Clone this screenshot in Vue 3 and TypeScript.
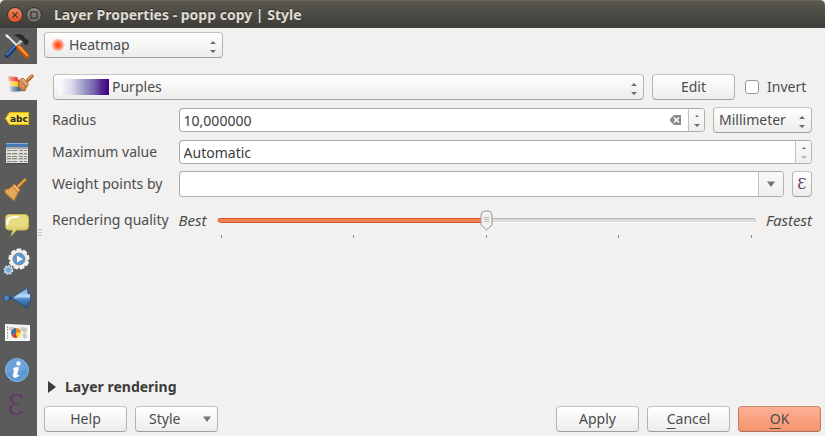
<script setup lang="ts">
import { computed, ref } from 'vue'

type IconName =
  | 'general' | 'style' | 'labels' | 'fields' | 'rendering' | 'display'
  | 'actions' | 'joins' | 'diagrams' | 'metadata' | 'variables'

const tabs: { id: IconName; label: string }[] = [
  { id: 'general', label: 'General' },
  { id: 'style', label: 'Style' },
  { id: 'labels', label: 'Labels' },
  { id: 'fields', label: 'Fields' },
  { id: 'rendering', label: 'Rendering' },
  { id: 'display', label: 'Display' },
  { id: 'actions', label: 'Actions' },
  { id: 'joins', label: 'Joins' },
  { id: 'diagrams', label: 'Diagrams' },
  { id: 'metadata', label: 'Metadata' },
  { id: 'variables', label: 'Variables' },
]

const activeTab = ref<IconName>('style')
const renderer = ref('Heatmap')
const ramp = ref('Purples')
const unit = ref('Millimeter')
const invert = ref(false)
const radius = ref('10,000000')
const maximum = ref('Automatic')
const weight = ref('')
const quality = ref(2)
const qualityPercent = computed(() => `${(quality.value / 4) * 100}%`)
const teeth = [0, 40, 80, 120, 160, 200, 240, 280, 320]
</script>

<template>
  <div class="window">
    <header class="titlebar">
      <button class="win-btn close" aria-label="Close">
        <svg viewBox="0 0 16 16"><path d="M5 5l6 6M11 5l-6 6" /></svg>
      </button>
      <button class="win-btn max" aria-label="Maximize">
        <svg viewBox="0 0 16 16"><path d="M4.500 4.500h7v7h-7z" /></svg>
      </button>
      <h1>Layer Properties - popp copy | Style</h1>
    </header>

    <div class="body">
      <nav class="sidebar">
        <button
          v-for="tab in tabs"
          :key="tab.id"
          class="tab"
          :class="{ active: tab.id === activeTab }"
          :aria-label="tab.label"
          @click="activeTab = tab.id"
        >
          <svg viewBox="0 0 37 36" fill="none">
            <g v-if="tab.id === 'general'">
              <path d="M17 17L7 27.500" stroke="#173a6b" stroke-width="4.600" stroke-linecap="round" />
              <path d="M16 17L7 26.500" stroke="#3f73b5" stroke-width="2" stroke-linecap="round" />
              <path d="M17 17l5-5" stroke="#c3c5c3" stroke-width="3" />
              <path d="M14 7.500c4-2.500 8-1.500 10 1l2 2.500 2.500 1v3l-2.500 2.500-2-1.500-1-2.500-3-2c-1-2-3-3-6-4z" fill="#272b2c" />
              <path d="M6.500 7l11 11" stroke="#e5e5e3" stroke-width="2" />
              <path d="M5.500 6l2.500 1.500 1 2.500-3-1z" fill="#fff" />
              <path d="M18.500 19l8.500 9" stroke="#c95300" stroke-width="4.800" stroke-linecap="round" />
              <path d="M19 18.500l8 8.500" stroke="#ff9a32" stroke-width="2" stroke-linecap="round" />
            </g>
            <g v-else-if="tab.id === 'style'">
              <defs>
                <linearGradient id="smear-red"><stop offset="0" stop-color="#e22" stop-opacity=".1" /><stop offset=".7" stop-color="#e84a3a" /></linearGradient>
                <linearGradient id="smear-yellow"><stop offset="0" stop-color="#fc2" stop-opacity=".1" /><stop offset=".6" stop-color="#ffd21c" /></linearGradient>
                <linearGradient id="smear-blue"><stop offset="0" stop-color="#368" stop-opacity=".1" /><stop offset=".6" stop-color="#4d6c90" /></linearGradient>
              </defs>
              <path d="M7 12l10 1 3 5-11-1z" fill="url(#smear-red)" />
              <path d="M8 17l11 1 3 5-12-1z" fill="url(#smear-yellow)" />
              <path d="M9 22l12 1 3 4-13 1z" fill="url(#smear-blue)" />
              <path d="M27 17l5-5" stroke="#a95c25" stroke-width="3.400" stroke-linecap="round" />
              <path d="M27 16.500l5-5" stroke="#e3a06a" stroke-width="1.400" stroke-linecap="round" />
              <path d="M20 15.500l3-1.500 5.500 6-1.500 3z" fill="#e5aa78" stroke="#a75c28" stroke-width=".8" />
              <path d="M19 16l7.500 7-1.500 4-3-.5-4-4.500z" fill="#cf8449" stroke="#a75c28" stroke-width=".8" />
              <path d="M20 19l4 4" stroke="#e5aa78" />
            </g>
            <g v-else-if="tab.id === 'labels'">
              <path d="M5.500 18.500l4-6h19v12h-19z" fill="#ffe14a" stroke="#e3b600" stroke-linejoin="round" />
              <circle cx="8" cy="18.500" r="1" fill="#fff8c0" />
              <text x="10" y="22" class="abc">abc</text>
            </g>
            <g v-else-if="tab.id === 'fields'">
              <path d="M6 7h22v20H6z" fill="#e2e3dd" />
              <path d="M6 8h22v3H6z" fill="#4679b4" />
              <path d="M6 7.500h22" stroke="#88aedb" />
              <path d="M6 11h22v2H6z" fill="#aaa9a4" />
              <path d="M7 14.500h20M7 17.500h20M7 20.500h20M7 22.500h20M7 25.500h20" stroke="#84867f" stroke-dasharray="4 1 5 2" />
              <path d="M6 18.500h22M6 23.500h22" stroke="#c7c9c1" />
              <path d="M6 27.500h22" stroke="#484947" />
            </g>
            <g v-else-if="tab.id === 'rendering'">
              <path d="M18 15l7-7" stroke="#a76517" stroke-width="3.400" stroke-linecap="round" />
              <path d="M18 14.500l7-7" stroke="#eba448" stroke-width="1.900" stroke-linecap="round" />
              <path d="M14 12l6 6-1.500 2-6-5.500z" fill="#ffc06a" stroke="#c07c2a" stroke-width=".7" />
              <path d="M12.500 14l6 6-4.500 9-9-8v-3.500l3.500-.5z" fill="#dfa050" stroke="#b06e20" stroke-width=".7" />
              <path d="M7 19l6 6M9 18l5.500 5.500M11 16.500l5 5" stroke="#f5be73" />
            </g>
            <g v-else-if="tab.id === 'display'">
              <path d="M9 6.500h16q3.500 0 3.500 3.500v8q0 4-3.500 4h-8.500L11 28l2-6H9q-3.500 0-3.500-4v-8Q5.500 6.500 9 6.500z" fill="#e8dc80" stroke="#c4b349" stroke-linejoin="round" />
              <path d="M7.500 16q-1-8 10-7" stroke="#fff" stroke-width="2" stroke-linecap="round" />
              <path d="M9 20h14q4 0 4-4" stroke="#d8c95e" />
            </g>
            <g v-else-if="tab.id === 'actions'">
              <g fill="#f0f0ed">
                <circle cx="19" cy="15" r="9" />
                <rect v-for="t in teeth" :key="t" x="16.500" y="4.500" width="5" height="5" rx="1" :transform="`rotate(${t} 19 15)`" />
              </g>
              <circle cx="19" cy="15" r="6" fill="#5b94cf" stroke="#7f8f9c" />
              <path d="M17 11.500v7l6-3.500z" fill="#fff" />
              <circle cx="8.500" cy="26" r="4" fill="#6ca1d8" stroke="#eee" stroke-width="1.500" stroke-dasharray="2 1" />
              <circle cx="8.500" cy="26" r="2.700" fill="#72a6db" stroke="#b6cbe0" />
            </g>
            <g v-else-if="tab.id === 'joins'">
              <defs>
                <linearGradient id="join-fill" x1="0" y1="0" x2="0" y2="1"><stop offset="0" stop-color="#5d96c8" /><stop offset=".42" stop-color="#b7dcfa" /><stop offset=".55" stop-color="#4a86bf" /><stop offset="1" stop-color="#254f8e" /></linearGradient>
              </defs>
              <path d="M9 18h4" stroke="#244b75" stroke-width="2" />
              <circle cx="6.500" cy="18" r="3" fill="#4d87c0" stroke="#244f83" />
              <path d="M12 18L27.500 7.500l.5 6h2.500v9H28l-.5 6z" fill="url(#join-fill)" stroke="#234c80" stroke-width=".8" stroke-linejoin="round" />
            </g>
            <g v-else-if="tab.id === 'diagrams'">
              <path d="M5.500 8.500l24 1v15h-24z" fill="#f3f3ef" stroke="#fff" />
              <path d="M9 11h5l2 2-4 2-3-1zM20 11l7 1v3l-3 2-3-3zM22 18l4-1 1 4-3 2z" fill="#c9cac4" />
              <path d="M7.500 10v13" stroke="#a5a7a0" stroke-dasharray="2 1" />
              <circle cx="16" cy="17" r="5" fill="#ffdb32" />
              <path d="M16 17v-5a5 5 0 0 0-5 5l1 3z" fill="#486fa6" />
              <path d="M16 17l-4 3a5 5 0 0 0 5 2z" fill="#df3636" />
              <path d="M16 12a5 5 0 0 1 5 4l-5 1z" fill="#e88c31" />
            </g>
            <g v-else-if="tab.id === 'metadata'">
              <circle cx="17" cy="18" r="11.500" fill="#5c99d5" stroke="#8bbae5" />
              <path d="M17 6.500A11.500 11.500 0 0 0 6 20q11 2 22-4A11.500 11.500 0 0 0 17 6.500z" fill="#6da3da" />
              <circle cx="18.500" cy="11.500" r="2.200" fill="#fff" />
              <path d="M14 16l4.500-.5-2 8h2.500l-1 1-3.500 1-1.500-1.500 2-7-1.500.5z" fill="#fff" stroke="#fff" stroke-linejoin="round" />
            </g>
            <text v-else x="16" y="27" text-anchor="middle" class="epsilon-large">Ɛ</text>
          </svg>
        </button>
      </nav>
      <div class="splitter"><i /><i /><i /></div>

      <main class="content">
        <div class="combo renderer">
          <span class="heat-dot" />
          <select v-model="renderer" aria-label="Renderer"><option>Heatmap</option></select>
          <svg class="updown" viewBox="0 0 6 12"><path d="M0 3l3-3 3 3zM0 9l3 3 3-3z" /></svg>
        </div>

        <form class="settings" @submit.prevent>
          <div class="row wide">
            <div class="combo ramp">
              <span class="swatch" />
              <select v-model="ramp" aria-label="Color ramp"><option>Purples</option></select>
              <svg class="updown" viewBox="0 0 6 12"><path d="M0 3l3-3 3 3zM0 9l3 3 3-3z" /></svg>
            </div>
            <button type="button" class="btn">Edit</button>
            <label class="check"><input v-model="invert" type="checkbox"><span>Invert</span></label>
          </div>

          <label for="radius">Radius</label>
          <div class="row">
            <div class="field">
              <input id="radius" v-model="radius" type="text">
              <button type="button" class="clear" aria-label="Clear">
                <svg viewBox="0 0 11 10"><path d="M4 0h7v10H4L0 6V4z" fill="#8c8c8a" /><path d="M4 2.500l5 5M9 2.500l-5 5" stroke="#fff" stroke-width="1.500" /></svg>
              </button>
              <button type="button" class="spin" aria-label="Adjust radius">
                <svg viewBox="0 0 6 13"><path d="M1 3l2-2 2 2z" /><path d="M0 10l3 3 3-3z" /></svg>
              </button>
            </div>
            <div class="combo unit">
              <select v-model="unit" aria-label="Unit"><option>Millimeter</option></select>
              <svg class="updown" viewBox="0 0 6 12"><path d="M0 3l3-3 3 3zM0 9l3 3 3-3z" /></svg>
            </div>
          </div>

          <label for="maximum">Maximum value</label>
          <div class="field">
            <input id="maximum" v-model="maximum" type="text">
            <button type="button" class="spin" aria-label="Adjust maximum">
              <svg viewBox="0 0 6 13"><path d="M1 3l2-2 2 2z" /><path class="dim" d="M0 10l3 3 3-3z" /></svg>
            </button>
          </div>

          <label for="weight">Weight points by</label>
          <div class="row">
            <div class="field tall">
              <input id="weight" v-model="weight" type="text">
              <button type="button" class="drop" aria-label="Choose field">
                <svg viewBox="0 0 8 6"><path d="M0 .5h8L4 6z" /></svg>
              </button>
            </div>
            <button type="button" class="btn expr" aria-label="Expression">Ɛ</button>
          </div>

          <label for="quality" class="quality-label">Rendering quality</label>
          <div class="row quality">
            <em>Best</em>
            <div class="slider">
              <div class="track"><div class="fill" :style="{ width: qualityPercent }" /></div>
              <div class="ticks"><i v-for="n in 5" :key="n" /></div>
              <div class="thumb-rail">
                <svg class="thumb" :style="{ left: qualityPercent }" viewBox="0 0 13 21">
                  <path d="M1 5q0-4 4-4h3q4 0 4 4v10l-5.500 5L1 15z" fill="#f0f0ee" stroke="#989894" />
                  <path d="M4 7.500h5M4 9.500h5M4 11.500h5" stroke="#b9b9b5" />
                </svg>
              </div>
              <input id="quality" v-model.number="quality" type="range" min="0" max="4">
            </div>
            <em>Fastest</em>
          </div>
        </form>

        <button class="disclosure">
          <svg viewBox="0 0 8 12"><path d="M0 0l8 6-8 6z" /></svg>
          Layer rendering
        </button>

        <footer class="actions">
          <button class="btn">Help</button>
          <button class="btn menu">
            <span>Style</span>
            <svg viewBox="0 0 8 6"><path d="M0 .5h8L4 6z" /></svg>
          </button>
          <span class="spacer" />
          <button class="btn">Apply</button>
          <button class="btn"><u>C</u>ancel</button>
          <button class="btn primary"><u>O</u>K</button>
        </footer>
      </main>
    </div>
  </div>
</template>

<style>
body {
  background: #f2f1f0;
}
</style>

<style scoped>
* {
  box-sizing: border-box;
}
.window {
  display: flex;
  flex-direction: column;
  min-height: 100vh;
  background: #f2f1f0;
  color: #4c4c4c;
  font: 14px/20px "Noto Sans", "Open Sans", sans-serif;
}
button, input, select {
  margin: 0;
  font: inherit;
  color: inherit;
}
button {
  padding: 0;
  border: 0;
  background: none;
}
.titlebar {
  display: flex;
  align-items: center;
  gap: 3px;
  height: 28px;
  padding: 0 7px;
  border-top: 1px solid #67655d;
  border-radius: 5px 5px 0 0;
  background: linear-gradient(#59574f, #3d3c38);
}
.titlebar h1 {
  margin: 0 0 0 9px;
  color: #dfdbd2;
  font-size: 14px;
  font-weight: 700;
  text-shadow: 0 -1px #2b2a27;
}
.win-btn {
  width: 16px;
  height: 16px;
  border: 1px solid #35332e;
  border-radius: 50%;
}
.win-btn svg {
  display: block;
  fill: none;
  stroke: #3a3935;
  stroke-width: 1.5;
}
.close {
  background: linear-gradient(#f58560, #e0501f);
}
.max {
  background: linear-gradient(#8b8980, #6a6861);
}
.body {
  display: flex;
  flex: 1;
}
.sidebar {
  display: flex;
  flex-direction: column;
  width: 37px;
  background: #5b5b5b;
}
.tab {
  height: 36px;
}
.tab svg {
  display: block;
  width: 37px;
  height: 36px;
}
.tab.active {
  background: #f2f1f0;
}
.abc {
  fill: #222;
  font: 700 9px "DejaVu Sans", sans-serif;
}
.epsilon-large {
  fill: #68356f;
  font: 27px "DejaVu Serif", serif;
}
.splitter {
  display: flex;
  flex-direction: column;
  justify-content: center;
  gap: 2px;
  width: 7px;
  padding-left: 1px;
}
.splitter i {
  width: 4px;
  height: 1px;
  background: #c5c4c2;
}
.content {
  display: flex;
  flex: 1;
  flex-direction: column;
  min-width: 0;
  padding: 4px 4px 4px 0;
}
.combo {
  display: grid;
  align-items: center;
  height: 26px;
  border: 1px solid;
  border-color: #c4c3c0 #b5b4b1 #a1a09c;
  border-radius: 4px;
  background: linear-gradient(#fff, #ececeb);
}
.combo > * {
  grid-area: 1 / 1;
}
.combo select {
  width: 100%;
  height: 24px;
  padding: 0 16px 0 5px;
  border: 0;
  outline: 0;
  appearance: none;
  background: none;
}
.updown {
  justify-self: end;
  width: 6px;
  height: 12px;
  margin: 4px 6px 0 0;
  fill: #6b6b69;
  pointer-events: none;
}
.renderer {
  width: 179px;
}
.renderer select {
  padding-left: 24px;
}
.heat-dot {
  width: 14px;
  height: 14px;
  margin-left: 6px;
  background: radial-gradient(circle closest-side, #ff4b13 15%, #ff7448 45%, transparent);
}
.ramp {
  flex: 1;
}
.ramp select {
  padding-left: 58px;
}
.swatch {
  width: 50px;
  height: 16px;
  margin-left: 5px;
  background: linear-gradient(90deg, #fcfbfd, #dcdbec 25%, #9d99c8 50%, #7566ae 70%, #53278f 85%, #3f007d);
}
.settings {
  display: grid;
  grid-template-columns: auto 1fr;
  align-items: center;
  gap: 7px 10px;
  margin-top: 16px;
  padding: 0 9px 0 8px;
}
.row {
  display: flex;
  align-items: center;
  gap: 8px;
}
.wide {
  grid-column: 1 / -1;
  padding-left: 1px;
}
.btn {
  width: 83px;
  height: 26px;
  border: 1px solid;
  border-color: #c4c3c0 #b5b4b1 #a1a09c;
  border-radius: 4px;
  background: linear-gradient(#fff, #ececeb);
}
.check {
  display: flex;
  align-items: center;
  gap: 8px;
  width: 69px;
  padding-left: 2px;
}
.check input {
  width: 14px;
  height: 14px;
  border: 1px solid #989792;
  border-radius: 3px;
  appearance: none;
  background: #fff;
}
.check input:checked {
  background: #f07746;
}
.field {
  display: flex;
  flex: 1;
  height: 24px;
  border: 1px solid;
  border-color: #a9a8a4 #b5b4b1 #b0afab #a9a8a4;
  border-radius: 4px;
  background: #fff;
  overflow: hidden;
}
.tall, .tall input {
  height: 26px;
}
.field input {
  flex: 1;
  min-width: 0;
  height: 22px;
  padding: 0 4px;
  border: 0;
  outline: 0;
  background: none;
  color: #3c3c3c;
}
.clear {
  width: 26px;
}
.clear svg {
  display: block;
  width: 11px;
  height: 10px;
  margin: 0 8px;
}
.spin, .drop {
  display: grid;
  place-items: center;
  width: 16px;
  border-left: 1px solid #c4c3c0;
  background: linear-gradient(#fafafa, #efefee);
}
.spin svg {
  width: 6px;
  height: 13px;
  fill: #6b6b69;
}
.spin .dim {
  fill: #b7b7b5;
}
.drop {
  width: 25px;
}
.drop svg, .menu svg {
  width: 8px;
  height: 6px;
  fill: #747472;
}
.unit {
  width: 99px;
}
.expr {
  width: 20px;
  color: #68356f;
  font: 15px/20px "DejaVu Serif", serif;
}
.quality-label, .quality {
  height: 32px;
  line-height: 32px;
}
.quality {
  gap: 10px;
}
.quality em {
  font-size: 15px;
}
.slider {
  position: relative;
  flex: 1;
  height: 32px;
}
.track {
  height: 5px;
  margin-top: 14px;
  border: 1px solid;
  border-color: #b5b4b1 #d0cfcc #fff;
  border-radius: 3px;
  background: #dddcda;
}
.fill {
  height: 5px;
  margin-top: -1px;
  border: 1px solid #d1592d;
  border-radius: 3px;
  background: #f58053;
}
.ticks {
  display: flex;
  justify-content: space-between;
  margin-top: 12px;
  padding: 0 4px;
}
.ticks i {
  width: 1px;
  height: 3px;
  background: #8b8a87;
}
.thumb-rail {
  position: absolute;
  inset: 6px 7px 0;
}
.thumb {
  position: absolute;
  width: 13px;
  height: 21px;
  margin-left: -6px;
}
.slider input {
  position: absolute;
  inset: 0;
  width: 100%;
  margin: 0;
  opacity: 0;
}
.disclosure {
  display: flex;
  align-items: center;
  gap: 9px;
  margin-top: auto;
  padding-left: 4px;
  color: #3c3c3c;
  font-weight: 700;
}
.disclosure svg {
  width: 8px;
  height: 12px;
  fill: currentColor;
}
.actions {
  display: flex;
  gap: 8px;
  margin-top: 9px;
}
.menu {
  display: flex;
  align-items: center;
  justify-content: space-between;
  padding: 0 6px 0 13px;
}
.spacer {
  flex: 1;
}
.primary {
  border-color: #c98a70 #bd7e64 #a96f57;
  background: linear-gradient(#fcb095, #f6946c);
}
u {
  text-underline-offset: 4px;
}
</style>
